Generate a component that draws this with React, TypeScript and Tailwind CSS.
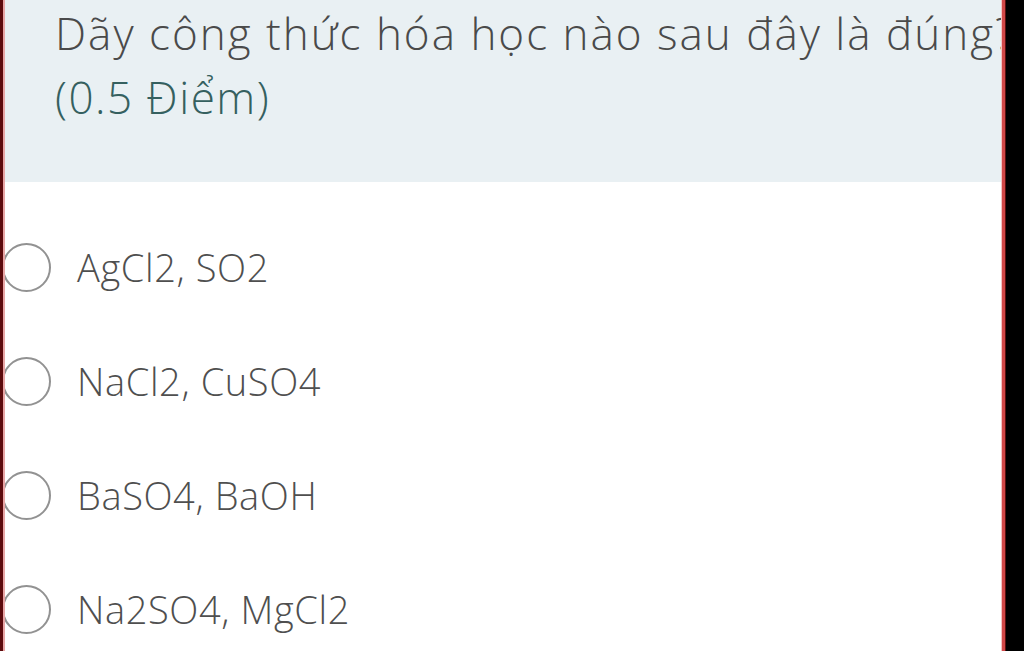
const OPTIONS = ['AgCl2, SO2', 'NaCl2, CuSO4', 'BaSO4, BaOH', 'Na2SO4, MgCl2'];

export default function App() {
  return (
    <div className="flex h-[651px] w-[1024px] overflow-hidden bg-black font-['Open_Sans',sans-serif]">
      {/* left edge */}
      <div className="flex w-[5px] shrink-0">
        <div className="w-[3px] bg-[#5c0b0d]" />
        <div className="w-[2px] bg-[#e8a5a5]" />
      </div>

      <div className="flex w-[996px] shrink-0 flex-col overflow-hidden bg-white">
        {/* question header */}
        <div className="h-[182px] shrink-0 bg-[#e9f0f3] pl-[50px] pt-[1px]">
          <p className="whitespace-nowrap text-[44px] font-light leading-[64px] tracking-[2px] text-[#4a4a4a]">
            Dãy công thức hóa học nào sau đây là đúng?
          </p>
          <p className="whitespace-nowrap text-[44px] font-light leading-[64px] tracking-[1.5px] text-[#35605f]">
            (0.5 Điểm)
          </p>
        </div>

        {/* options */}
        <div className="flex flex-col pt-[28px]">
          {OPTIONS.map((opt) => (
            <div key={opt} className="flex h-[114px] items-center">
              <div className="-ml-[3px] h-[49px] w-[49px] shrink-0 rounded-full border-2 border-[#929292]" />
              <span className="ml-[26px] whitespace-nowrap text-[38px] font-light tracking-[0.6px] text-[#4f4f4f]">
                {opt}
              </span>
            </div>
          ))}
        </div>
      </div>

      {/* right edge */}
      <div className="flex w-[5px] shrink-0">
        <div className="w-[1px] bg-[#f3c4c4]" />
        <div className="w-[3px] bg-[#d04848]" />
        <div className="w-[1px] bg-[#5a1010]" />
      </div>
    </div>
  );
}
